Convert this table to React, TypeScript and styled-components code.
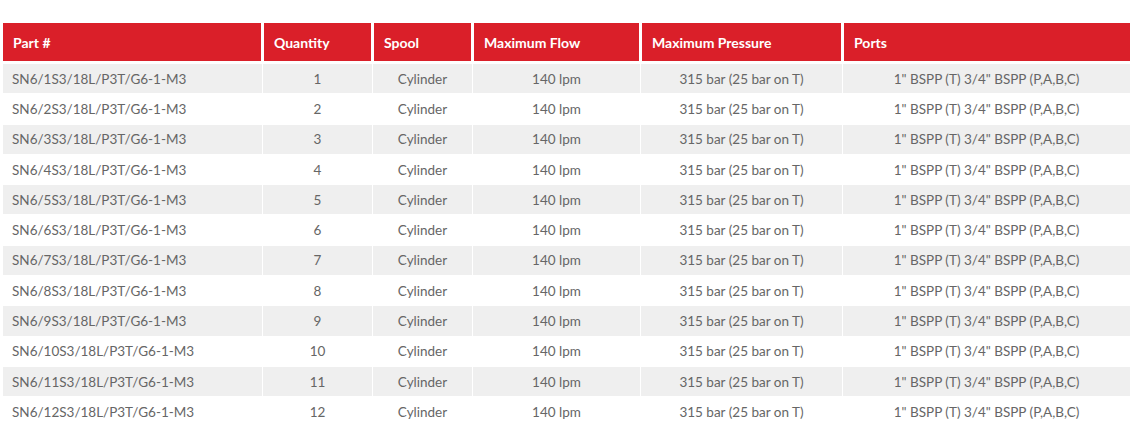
import styled, { createGlobalStyle } from 'styled-components';

const GlobalStyle = createGlobalStyle`
  html, body {
    margin: 0;
    padding: 0;
    background: #fff;
  }
  body {
    font-family: Lato, 'Liberation Sans', sans-serif;
  }
`;

type Align = 'left' | 'center';

const columns: { title: string; width: number; align: Align }[] = [
  { title: 'Part #', width: 259, align: 'left' },
  { title: 'Quantity', width: 109, align: 'center' },
  { title: 'Spool', width: 99, align: 'center' },
  { title: 'Maximum Flow', width: 167, align: 'center' },
  { title: 'Maximum Pressure', width: 201, align: 'center' },
  { title: 'Ports', width: 287, align: 'center' },
];

const rows = Array.from({ length: 12 }, (_, i) => [
  `SN6/${i + 1}S3/18L/P3T/G6-1-M3`,
  String(i + 1),
  'Cylinder',
  '140 lpm',
  '315 bar (25 bar on T)',
  '1" BSPP (T) 3/4" BSPP (P,A,B,C)',
]);

const App: React.FC = () => {
  return (
    <>
      <GlobalStyle />
      <Wrapper>
        <PartsTable>
          <colgroup>
            {columns.map((c) => (
              <col key={c.title} style={{ width: c.width }} />
            ))}
          </colgroup>
          <thead>
            <tr>
              {columns.map((c) => (
                <HeadCell key={c.title}>{c.title}</HeadCell>
              ))}
            </tr>
          </thead>
          <tbody>
            {rows.map((row, r) => (
              <BodyRow key={r} $striped={r % 2 === 0}>
                {row.map((value, c) => (
                  <BodyCell key={c} $align={columns[c].align}>
                    {value}
                  </BodyCell>
                ))}
              </BodyRow>
            ))}
          </tbody>
        </PartsTable>
      </Wrapper>
    </>
  );
};

const Wrapper = styled.div`
  padding: 22px 2px 0 2px;
`;

const PartsTable = styled.table`
  width: 1129px;
  table-layout: fixed;
  border-collapse: separate;
  border-spacing: 1px;
`;

const HeadCell = styled.th`
  height: 38px;
  padding: 0 0 0 10px;
  background: #da1f29;
  border-left: 1px solid #fff;
  border-right: 1px solid #fff;
  border-bottom: 2px solid #fff;
  color: #fff;
  font-weight: 700;
  font-size: 14px;
  text-align: left;
  vertical-align: middle;
  &:first-child {
    border-left: none;
  }
  &:last-child {
    border-right: none;
  }
`;

const BodyRow = styled.tr<{ $striped: boolean }>`
  background: ${(p) => (p.$striped ? '#efefef' : '#fff')};
`;

const BodyCell = styled.td<{ $align: Align }>`
  height: 29.3px;
  padding: 0 0 0 ${(p) => (p.$align === 'left' ? '9px' : '0')};
  font-size: 13.5px;
  color: #666;
  text-align: ${(p) => p.$align};
  vertical-align: middle;
  white-space: nowrap;
`;

export default App;
